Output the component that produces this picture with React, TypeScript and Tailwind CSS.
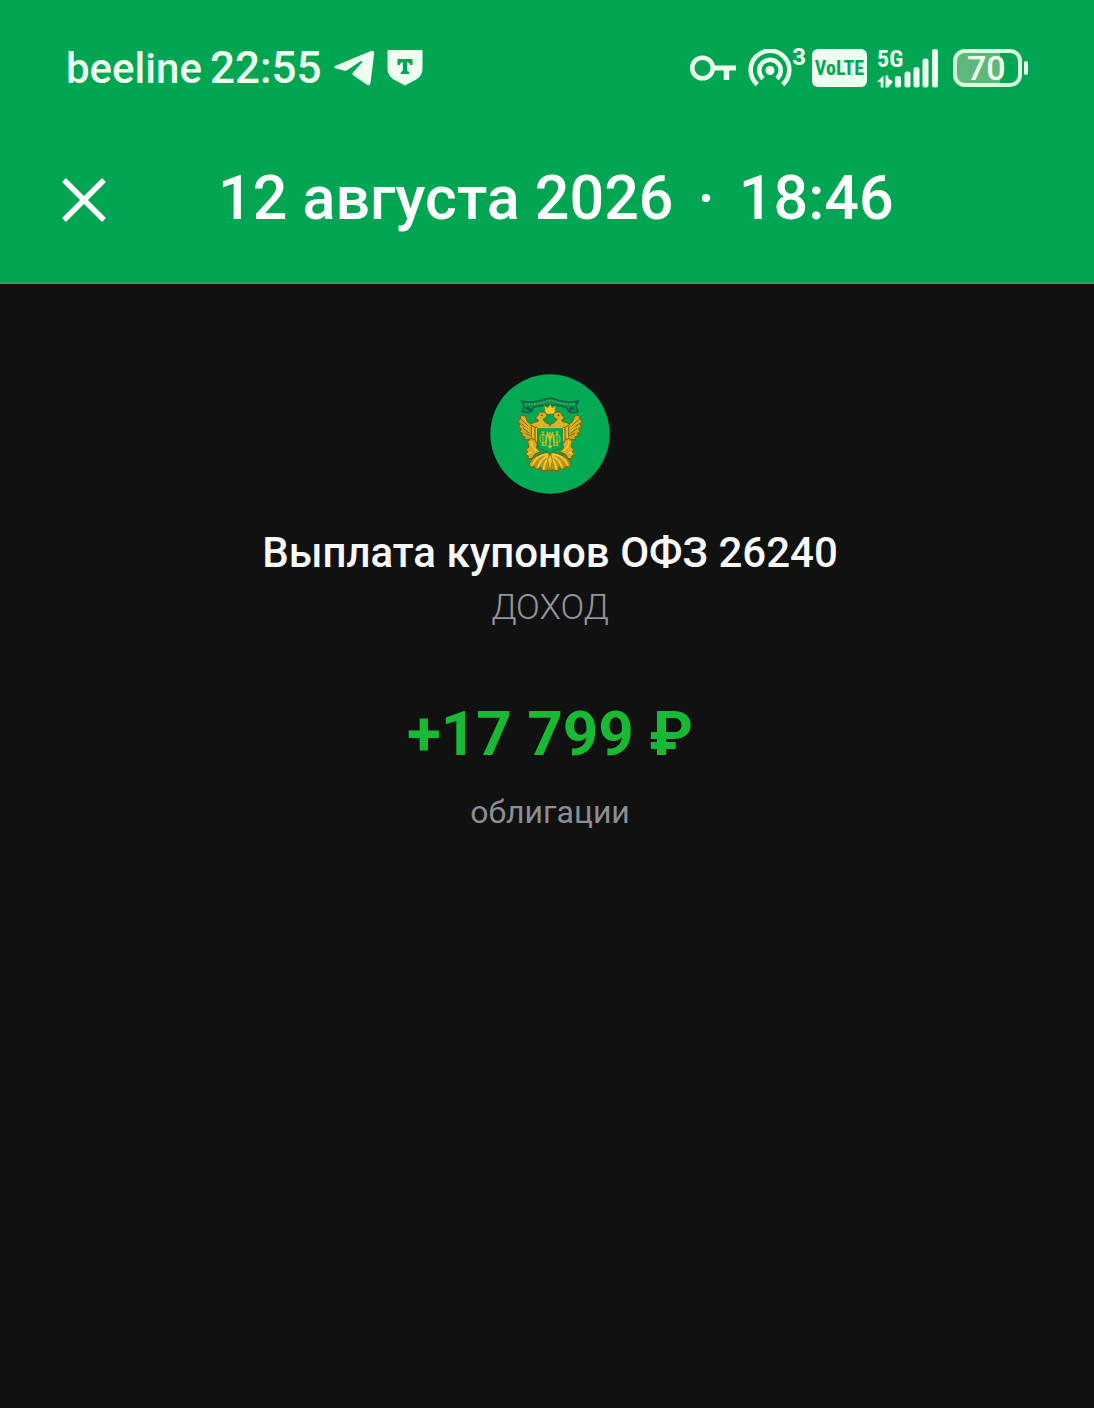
const payment = {
  date: "12 августа 2026",
  time: "18:46",
  title: "Выплата купонов ОФЗ 26240",
  kind: "ДОХОД",
  amount: "+17 799 ₽",
  category: "облигации",
};

function TelegramIcon() {
  return (
    <svg viewBox="0 0 41 36" className="h-9 w-[41px]" fill="currentColor" aria-hidden="true">
      <path d="M1.500 15.800 37 .9c2-.8 3.400.3 3.200 2.300l-3.700 29.600c-.3 2.400-2.300 2.900-4.200 1.500L19.200 25.200c-1-.8-1-1.900-.2-2.800l9-9.800c.9-1.200-.1-2.200-1.500-1.300L13.500 20c-1.200.8-2.400 1-3.800.5L1.400 18.300c-1.600-.5-1.500-1.800.1-2.500Z" />
    </svg>
  );
}

function ShieldIcon() {
  return (
    <svg viewBox="0 0 36 36" className="size-9" aria-hidden="true">
      <path
        d="M1.500 0h33c.5 0 1 .5 1 1v17.500c0 5-2.500 8.700-6.700 11.200L18 35.600 7.200 29.700C3 27.200.5 23.500.5 18.500V1c0-.5.5-1 1-1Z"
        fill="currentColor"
      />
      <path
        d="M10.500 9h15v6h-2.500c-.3-1.700-1-2.600-2.800-2.700v7.400c0 1.500.6 2 2 2.100V24h-8.400v-2.200c1.400-.1 2-.6 2-2.100v-7.400c-1.800.1-2.500 1-2.800 2.700h-2.500Z"
        fill="#02a652"
      />
    </svg>
  );
}

function KeyIcon() {
  return (
    <svg viewBox="0 0 48 28" className="h-7 w-12" fill="none" stroke="currentColor" aria-hidden="true">
      <circle cx="12.500" cy="14" r="10.300" strokeWidth="4.600" />
      <path d="M24 14h22" strokeWidth="5" />
      <path d="M36.500 14v12" strokeWidth="5.500" />
    </svg>
  );
}

function HotspotIcon() {
  return (
    <svg viewBox="0 0 44 38" className="h-[38px] w-11" fill="none" stroke="currentColor" strokeWidth="4.500" aria-hidden="true">
      <path d="M9.300 35.500a19.300 19.300 0 1 1 25.400 0" />
      <path d="M15.200 29.600a10.700 10.700 0 1 1 13.600 0" />
      <circle cx="22" cy="21.500" r="4.500" fill="currentColor" stroke="none" />
    </svg>
  );
}

function SignalIcon() {
  return (
    <svg viewBox="0 0 62 39" className="h-[39px] w-[62px]" fill="currentColor" aria-hidden="true">
      <path d="M0 33 6.500 26.500v12H3.700V33ZM8.500 26.500h2.800v3l4.700 3-4.700 6H8.500Z" />
      <rect x="18" y="27" width="6" height="11.500" rx="2.500" />
      <rect x="27.500" y="22.500" width="6" height="16" rx="2.500" />
      <rect x="36.500" y="18" width="6" height="20.500" rx="2.500" />
      <rect x="45.500" y="9.500" width="6" height="29" rx="2.500" />
      <rect x="55" y="0" width="6" height="38.500" rx="2.500" />
    </svg>
  );
}

function Emblem() {
  return (
    <svg viewBox="30 24 360 360" className="size-[120px]" role="img" aria-label="Минфин">
      <circle cx="210" cy="204" r="179" fill="#04a953" />
      <g transform="translate(97 75)">
        {/* ribbon */}
        <path
          d="M28 30c30 8 56-2 85-9 29 7 55 17 85 9l-7 15 6 17c-10 4-19 4-28 0l-7-13c-33-9-65-9-98 0l-7 13c-9 4-18 4-28 0l6-17Z"
          fill="#0b8f52"
          stroke="#086040"
          strokeWidth="4"
        />
        <path d="M38 38c28 5 50-4 75-9 25 5 47 14 75 9" fill="none" stroke="#4fb254" strokeWidth="4" strokeDasharray="6 3" />
        <path d="M40 52h10l6 10M186 52h-10l-6 10" fill="none" stroke="#075a50" strokeWidth="7" />
        {/* crown */}
        <path d="M96 43l10 8 7-12 7 12 10-8-3 26H99Z" fill="#f3c929" stroke="#8a7518" strokeWidth="2" />
        {[0, 1].map((side) => (
          <g key={side} transform={side ? "matrix(-1 0 0 1 226 0)" : undefined}>
            {/* tail feathers */}
            <path
              d="M113 182l-26 6-26 13-12 19 7 10 9-5 5 10 11-2 3-7 5 13 12 1 4-5 8 9Z"
              fill="#b8931c"
              stroke="#6f600f"
              strokeWidth="3"
            />
            <path
              d="M104 190c-18 2-36 12-44 32M106 195c-14 6-24 18-29 34M109 200c-8 10-14 22-15 34"
              fill="none"
              stroke="#f0c72c"
              strokeWidth="6"
              strokeLinecap="round"
            />
            {/* wing with the feathers hanging down */}
            <path
              d="M24 75c6-3 13-2 17 3l5 17 20 5 14 8v52l-10-8-9 2-12-10-13 3 2-10-11-2 4-8-9-4 5-9-8-8 5-7-8-9 8-6Z"
              fill="#d4a71f"
              stroke="#6f640f"
              strokeWidth="3"
            />
            <path d="M27 86l21 20M28 99l20 17M32 112l18 14M39 127l15 7M57 106v32M68 110v36" fill="none" stroke="#7b6913" strokeWidth="3" />
            <path d="M30 79l20 22M31 94l20 17M36 108l16 12M62 106v34M73 110v40" fill="none" stroke="#f0c62d" strokeWidth="3" />
            {/* head and neck */}
            <path
              d="M68 82l8-7c2-11 14-16 23-9 5 4 5 10 0 14l-7 5 7 9 14 7v8H68l-14-8c4-6 12-7 22-9l2-6Z"
              fill="#e0b323"
              stroke="#6f610f"
              strokeWidth="3"
            />
            <circle cx="88" cy="73" r="3" fill="#554f0d" />
            {/* leg */}
            <path
              d="M46 152l9-10 12 4 8 14-3 11 13 12-17 6-9 13-12 2 1-9-10-4 8-8-5-8 9-7Z"
              fill="#d8ab20"
              stroke="#71620f"
              strokeWidth="3"
            />
            <path d="M56 150l4 16 12 14M46 188l12-5" fill="none" stroke="#f5d034" strokeWidth="4" />
          </g>
        ))}
        {/* chest shield with the monogram */}
        <path d="M102 76h22v10l-11 10-11-10Z" fill="#05a651" />
        <path d="M76 110h74v54c0 12-24 10-37 25-13-15-37-13-37-25Z" fill="#08a84e" stroke="#0b8a41" strokeWidth="3" />
        <path d="M74 109h78" stroke="#e2b925" strokeWidth="5" />
        <g fill="none" stroke="#d2c329" strokeWidth="3">
          <path d="M92 122v42M134 122v42M87 123h10M129 123h10M87 163h10M129 163h10" />
          <ellipse cx="92" cy="143" rx="9" ry="13" />
          <ellipse cx="134" cy="143" rx="9" ry="13" />
          <path d="M100 165l5-42 8 28 8-28 5 42M113 122v48M107 164l6 7 6-7" strokeWidth="4" />
        </g>
        <path d="M113 188l7 18-7 38-7-38Z" fill="#efc82c" stroke="#7b680f" strokeWidth="2" />
      </g>
    </svg>
  );
}

function StatusBar() {
  return (
    <div className="flex h-[136px] items-center justify-between px-[66px] text-[#edffee]">
      <div className="flex items-center gap-3">
        <div className="flex items-baseline gap-2 leading-none font-medium">
          <span className="text-[42px]">beeline</span>
          <time className="text-[44px]">22:55</time>
        </div>
        <TelegramIcon />
        <ShieldIcon />
      </div>
      <div className="flex items-center gap-2.5">
        <KeyIcon />
        <div className="flex items-start">
          <HotspotIcon />
          <span className="text-2xl leading-4 font-bold">3</span>
        </div>
        <span className="-ml-1 flex h-[38px] w-[55px] items-center justify-center rounded-md bg-[#edffee] font-['Liberation_Sans_Narrow','Roboto_Condensed',Roboto,sans-serif] text-xl leading-none font-bold text-[#02a652]">
          VoLTE
        </span>
        <div className="relative">
          <SignalIcon />
          <span className="absolute top-0 left-0 font-['Liberation_Sans_Narrow','Roboto_Condensed',Roboto,sans-serif] text-2xl leading-5 font-bold">
            5G
          </span>
        </div>
        <div className="ml-1 flex items-center gap-0.5">
          <span className="flex h-[38px] w-[69px] items-center rounded-xl border-4 border-[#d9ffdf] bg-linear-to-r from-[#5fb879] from-70% to-[#02a652] to-70% pl-2.5 text-[34px] leading-none font-medium">
            70
          </span>
          <span className="h-3.5 w-1 rounded-full bg-[#edffee]" />
        </div>
      </div>
    </div>
  );
}

export default function App() {
  return (
    <div className="flex min-h-screen flex-col bg-[#111111] font-[Roboto,'Noto_Sans',sans-serif]">
      <header className="border-b-2 border-[#3a9c5c] bg-[#02a652]">
        <StatusBar />
        <div className="flex h-[146px] items-start gap-28 px-[62px] pt-7 text-white">
          <button type="button" aria-label="Закрыть" className="flex h-[72px] items-center">
            <svg viewBox="0 0 44 44" className="size-11" fill="none" stroke="currentColor" strokeWidth="5.500" aria-hidden="true">
              <path d="m2 2 40 40M42 2 2 42" />
            </svg>
          </button>
          <h1 className="flex gap-6 text-[61px] leading-[68px] font-medium whitespace-nowrap">
            <span>{payment.date}</span>
            <span>·</span>
            <time>{payment.time}</time>
          </h1>
        </div>
      </header>
      <main className="flex flex-1 flex-col items-center pt-[90px] pl-1.5">
        <Emblem />
        <h2 className="mt-8 text-[42px] leading-[54px] font-medium text-[#f8f8f8]">{payment.title}</h2>
        <p className="text-[35px] leading-[56px] font-light text-[#94959a]">{payment.kind}</p>
        <p className="mt-[58px] text-[62px] leading-[80px] font-bold text-[#18b933]">{payment.amount}</p>
        <p className="mt-4 text-[32px] leading-[44px] text-[#8d8e93]">{payment.category}</p>
      </main>
    </div>
  );
}
